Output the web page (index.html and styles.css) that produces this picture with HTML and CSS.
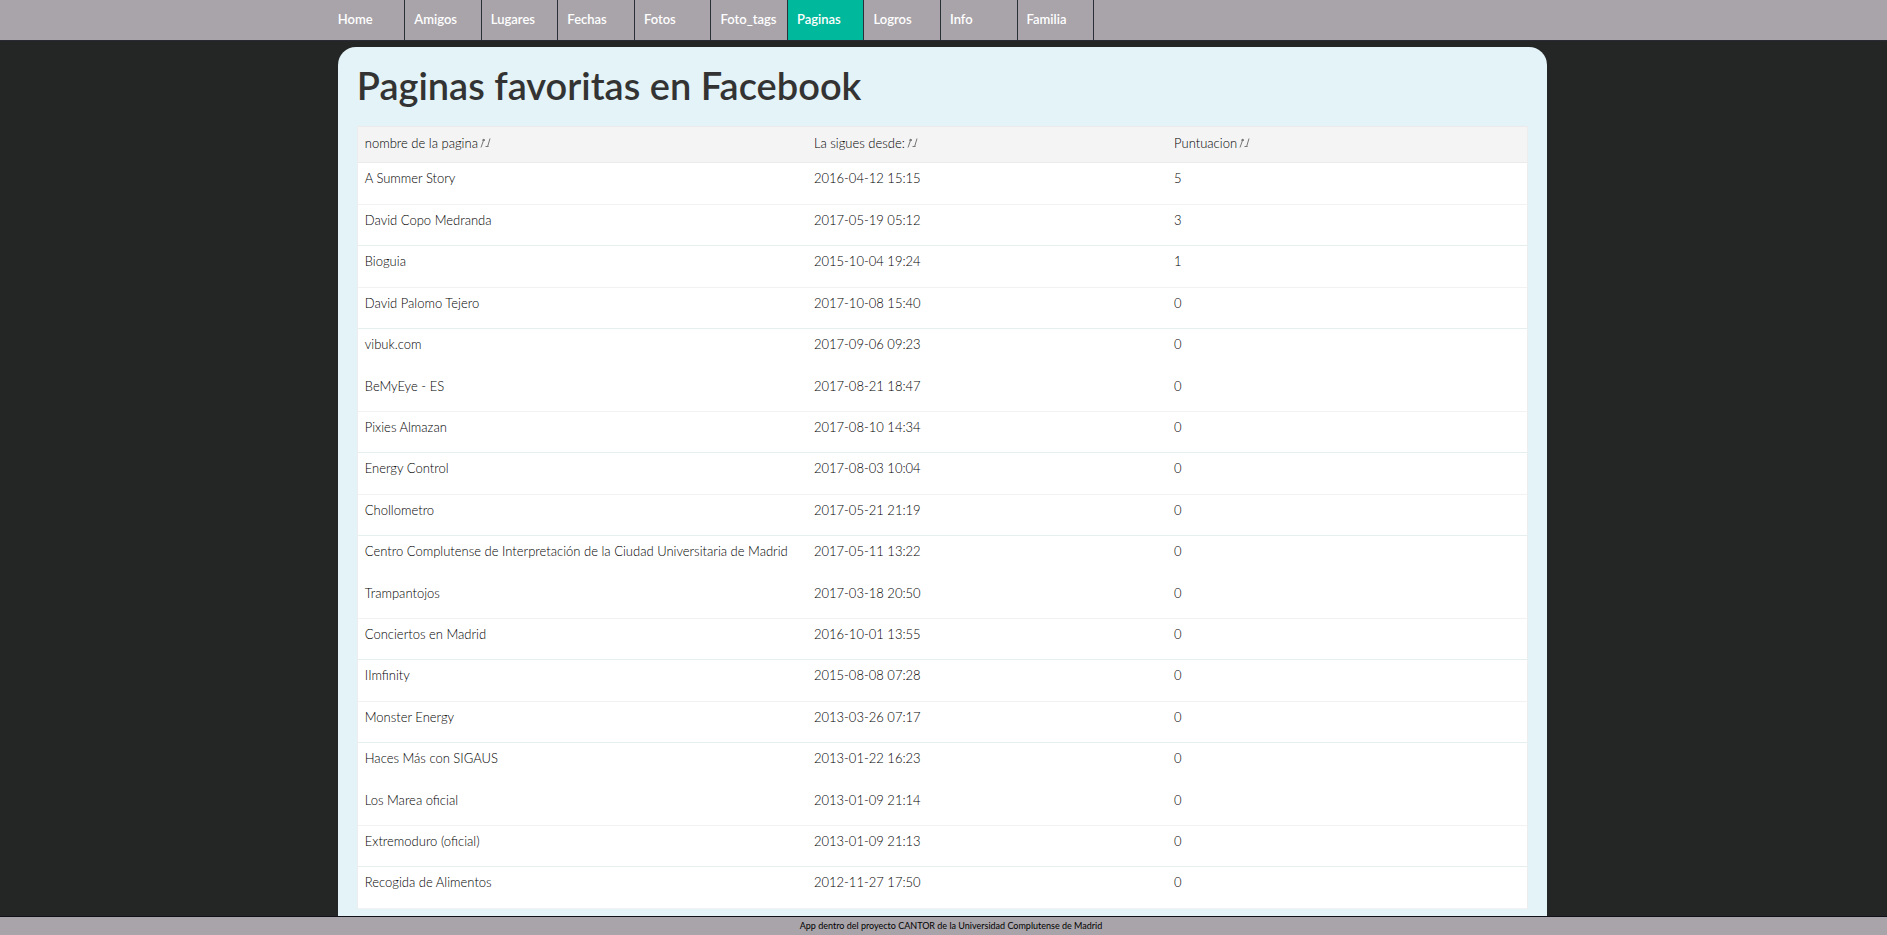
FILE: index.html
```html
<!DOCTYPE html>
<html lang="es">
<head>
<meta charset="utf-8">
<title>Paginas favoritas en Facebook</title>
<link rel="stylesheet" href="styles.css">
</head>
<body>
<nav class="navbar">
  <ul class="menu">
    <li><a href="#">Home</a></li>
    <li><a href="#">Amigos</a></li>
    <li><a href="#">Lugares</a></li>
    <li><a href="#">Fechas</a></li>
    <li><a href="#">Fotos</a></li>
    <li><a href="#">Foto_tags</a></li>
    <li><a href="#" class="active" aria-current="page">Paginas</a></li>
    <li><a href="#">Logros</a></li>
    <li><a href="#">Info</a></li>
    <li><a href="#">Familia</a></li>
  </ul>
</nav>
<main class="content">
  <div class="panel">
    <h1>Paginas favoritas en Facebook</h1>
    <table class="pages">
      <colgroup><col class="col-name"><col class="col-date"><col class="col-score"></colgroup>
      <thead>
        <tr>
          <th scope="col">nombre de la pagina<svg class="sort" viewBox="0 0 11 10" aria-hidden="true"><path d="M1 9.500L4 1M2 2.500L4 1L4.500 3M10 .5L7.500 9M5.500 8.500H8.500"/></svg></th>
          <th scope="col">La sigues desde:<svg class="sort" viewBox="0 0 11 10" aria-hidden="true"><path d="M1 9.500L4 1M2 2.500L4 1L4.500 3M10 .5L7.500 9M5.500 8.500H8.500"/></svg></th>
          <th scope="col">Puntuacion<svg class="sort" viewBox="0 0 11 10" aria-hidden="true"><path d="M1 9.500L4 1M2 2.500L4 1L4.500 3M10 .5L7.500 9M5.500 8.500H8.500"/></svg></th>
        </tr>
      </thead>
      <tbody>
        <tr><td>A Summer Story</td><td>2016-04-12 15:15</td><td>5</td></tr>
        <tr><td>David Copo Medranda</td><td>2017-05-19 05:12</td><td>3</td></tr>
        <tr><td>Bioguia</td><td>2015-10-04 19:24</td><td>1</td></tr>
        <tr><td>David Palomo Tejero</td><td>2017-10-08 15:40</td><td>0</td></tr>
        <tr><td>vibuk.com</td><td>2017-09-06 09:23</td><td>0</td></tr>
        <tr><td>BeMyEye - ES</td><td>2017-08-21 18:47</td><td>0</td></tr>
        <tr><td>Pixies Almazan</td><td>2017-08-10 14:34</td><td>0</td></tr>
        <tr><td>Energy Control</td><td>2017-08-03 10:04</td><td>0</td></tr>
        <tr><td>Chollometro</td><td>2017-05-21 21:19</td><td>0</td></tr>
        <tr><td>Centro Complutense de Interpretación de la Ciudad Universitaria de Madrid</td><td>2017-05-11 13:22</td><td>0</td></tr>
        <tr><td>Trampantojos</td><td>2017-03-18 20:50</td><td>0</td></tr>
        <tr><td>Conciertos en Madrid</td><td>2016-10-01 13:55</td><td>0</td></tr>
        <tr><td>IImfinity</td><td>2015-08-08 07:28</td><td>0</td></tr>
        <tr><td>Monster Energy</td><td>2013-03-26 07:17</td><td>0</td></tr>
        <tr><td>Haces Más con SIGAUS</td><td>2013-01-22 16:23</td><td>0</td></tr>
        <tr><td>Los Marea oficial</td><td>2013-01-09 21:14</td><td>0</td></tr>
        <tr><td>Extremoduro (oficial)</td><td>2013-01-09 21:13</td><td>0</td></tr>
        <tr><td>Recogida de Alimentos</td><td>2012-11-27 17:50</td><td>0</td></tr>
      </tbody>
    </table>
  </div>
</main>
<footer class="footer">App dentro del proyecto CANTOR de la Universidad Complutense de Madrid</footer>
</body>
</html>
```
FILE: styles.css
```css
* {
  box-sizing: border-box;
}

body {
  margin: 0;
  min-height: 100vh;
  display: flex;
  flex-direction: column;
  background: #242625;
  color: #333;
  font-family: Lato, "Open Sans", sans-serif;
  font-size: 13px;
}

.navbar {
  padding-left: 17.9%;
  background: #a9a4aa;
  border-bottom: 1px solid #2a2a35;
}

.menu {
  display: grid;
  grid-template-columns: repeat(10, 1fr);
  width: 49.4%;
  margin: 0 0 0 -9px;
  padding: 0;
  list-style: none;
}

.menu a {
  display: block;
  height: 40px;
  padding: 0 0 0 9px;
  border-right: 1px solid #2a2f38;
  color: #fff;
  font-weight: 600;
  line-height: 38px;
  text-decoration: none;
}

.menu .active {
  background: #00b99c;
}

.content {
  flex: 1;
  display: flex;
  padding: 6px 18% 0 17.9%;
}

.panel {
  flex: 1;
  padding: 14px 19px 7px;
  border-radius: 18px 18px 0 0;
  background: #e4f3f7;
}

h1 {
  margin: 0 0 17px;
  font-size: 38px;
  font-weight: 600;
  line-height: 48px;
}

.pages {
  width: 100%;
  table-layout: fixed;
  border-spacing: 0;
  border-left: 1px solid #ededed;
  border-right: 1px solid #ededed;
  color: #000;
}

.col-name {
  width: 38.4%;
}

.col-date,
.col-score {
  width: 30.8%;
}

th {
  padding: 6px 7px 9px;
  background: #f4f4f4;
  border-top: 1px solid #ebebeb;
  border-bottom: 1px solid #ebebeb;
  font-weight: 300;
  line-height: 20px;
  text-align: left;
}

td {
  padding: 5px 7px 15px;
  background: #fff;
  border-bottom: 1px solid #e6efef;
  font-weight: 300;
  line-height: 20px;
}

tr:nth-child(5n + 1) td,
tr:nth-child(5n + 3) td {
  border-bottom-color: #f2f2f2;
}

tr:nth-child(5n) td {
  border-bottom-color: #fff;
}

tr:first-child td,
tr:nth-child(5n + 3) td,
tr:nth-child(5n) td {
  padding-bottom: 16px;
}

.sort {
  width: 11px;
  height: 10px;
  margin-left: 2px;
  fill: none;
  stroke: #777;
  stroke-width: 1;
}

.footer {
  height: 19px;
  padding-left: 15px;
  border-top: 1px solid #101018;
  background: #a9a4aa;
  color: #000;
  font-size: 9px;
  line-height: 18px;
  text-align: center;
}
```
